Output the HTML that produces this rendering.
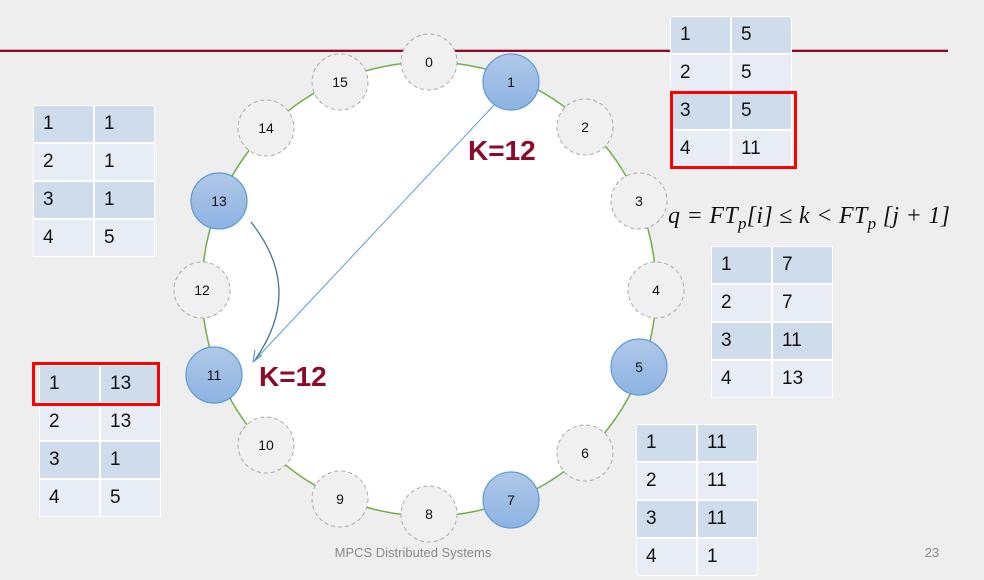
<!DOCTYPE html>
<html><head><style>
body{margin:0;width:984px;height:580px;background:#eeeeee;position:relative;overflow:hidden;font-family:"Liberation Sans",sans-serif}
.t{position:absolute;width:122px;height:152px}
.t div{position:absolute;box-sizing:border-box;border:1px solid #fff;width:61px;height:38px;padding:8px 0 0 9px;font-size:19px;color:#111;line-height:20px}
.d{background:#cfdcec}.l{background:#e8edf5}
.rb{position:absolute;border:3px solid #f00;box-sizing:border-box}
</style></head><body>
<div style="position:absolute;left:0;top:49px;width:948px;height:1px;background:#d9a0ac"></div>
<div style="position:absolute;left:0;top:50px;width:948px;height:2px;background:#8b0a2a"></div>
<svg width="984" height="580" style="position:absolute;left:0;top:0">
<circle cx="429" cy="289" r="227" fill="#fff" stroke="#70ad47" stroke-width="1.5"/>
<g font-family="Liberation Sans" font-size="14" text-anchor="middle" fill="#111">
<g fill="#f0f0f0" stroke="#aaa" stroke-dasharray="4,3">
<circle cx="429" cy="62" r="28"/><circle cx="585" cy="127" r="28"/><circle cx="639" cy="201" r="28"/><circle cx="656" cy="290" r="28"/><circle cx="585" cy="453" r="28"/><circle cx="429" cy="514" r="28"/><circle cx="340" cy="499" r="28"/><circle cx="266" cy="445" r="28"/><circle cx="202" cy="290" r="28"/><circle cx="266" cy="128" r="28"/><circle cx="340" cy="82" r="28"/>
</g>
<defs><linearGradient id="g" x1="0" y1="0" x2="0" y2="1"><stop offset="0" stop-color="#b0c8e8"/><stop offset="1" stop-color="#8db3e2"/></linearGradient></defs>
<g fill="url(#g)" stroke="#5b9bd5" stroke-width="1.2">
<circle cx="511" cy="82" r="28"/><circle cx="639" cy="367" r="28"/><circle cx="511" cy="500" r="28"/><circle cx="214" cy="375" r="28"/><circle cx="219" cy="201" r="28"/>
</g>
<text x="429" y="67">0</text><text x="511" y="87">1</text><text x="585" y="132">2</text><text x="639" y="206">3</text><text x="656" y="295">4</text><text x="639" y="372">5</text><text x="585" y="458">6</text><text x="511" y="505">7</text><text x="429" y="519">8</text><text x="340" y="504">9</text><text x="266" y="450">10</text><text x="214" y="380">11</text><text x="202" y="295">12</text><text x="219" y="206">13</text><text x="266" y="133">14</text><text x="340" y="87">15</text>
</g>
<line x1="495" y1="104" x2="254" y2="361" stroke="#5b9bd5" stroke-width="1"/>
<path d="M251 222 C285 265 290 310 255 360" fill="none" stroke="#41719c" stroke-width="1.3"/>
<path d="M253 362 L255 350 M253 362 L262 355" stroke="#5b9bd5" stroke-width="1.2"/>
<g font-family="Liberation Sans" font-weight="bold" font-size="28" fill="#8b0a2a">
<text x="468" y="160">K=12</text><text x="259" y="386">K=12</text></g>
<text x="668" y="223" font-family="Liberation Serif" font-style="italic" font-size="24" fill="#111" textLength="282">q = FT<tspan font-size="17" dy="6">p</tspan><tspan dy="-6">[i] ≤ k &lt; FT</tspan><tspan font-size="17" dy="6">p</tspan><tspan dy="-6"> [j + 1]</tspan></text>
<text x="413" y="557" font-family="Liberation Sans" font-size="13" fill="#8a8a8a" text-anchor="middle">MPCS Distributed Systems</text>
<text x="932" y="557" font-family="Liberation Sans" font-size="13" fill="#8a8a8a" text-anchor="middle">23</text>
</svg>

<div class="t" style="left:670px;top:16px">
<div class="d" style="left:0;top:0">1</div><div class="d" style="left:61px;top:0">5</div>
<div class="l" style="left:0;top:38px">2</div><div class="l" style="left:61px;top:38px">5</div>
<div class="d" style="left:0;top:76px">3</div><div class="d" style="left:61px;top:76px">5</div>
<div class="l" style="left:0;top:114px">4</div><div class="l" style="left:61px;top:114px">11</div></div>
<div class="rb" style="left:670px;top:91px;width:127px;height:78px"></div>

<div class="t" style="left:33px;top:105px">
<div class="d" style="left:0;top:0">1</div><div class="d" style="left:61px;top:0">1</div>
<div class="l" style="left:0;top:38px">2</div><div class="l" style="left:61px;top:38px">1</div>
<div class="d" style="left:0;top:76px">3</div><div class="d" style="left:61px;top:76px">1</div>
<div class="l" style="left:0;top:114px">4</div><div class="l" style="left:61px;top:114px">5</div></div>

<div class="t" style="left:711px;top:246px">
<div class="d" style="left:0;top:0">1</div><div class="d" style="left:61px;top:0">7</div>
<div class="l" style="left:0;top:38px">2</div><div class="l" style="left:61px;top:38px">7</div>
<div class="d" style="left:0;top:76px">3</div><div class="d" style="left:61px;top:76px">11</div>
<div class="l" style="left:0;top:114px">4</div><div class="l" style="left:61px;top:114px">13</div></div>

<div class="t" style="left:39px;top:365px">
<div class="d" style="left:0;top:0">1</div><div class="d" style="left:61px;top:0">13</div>
<div class="l" style="left:0;top:38px">2</div><div class="l" style="left:61px;top:38px">13</div>
<div class="d" style="left:0;top:76px">3</div><div class="d" style="left:61px;top:76px">1</div>
<div class="l" style="left:0;top:114px">4</div><div class="l" style="left:61px;top:114px">5</div></div>
<div class="rb" style="left:32px;top:362px;width:128px;height:44px"></div>

<div class="t" style="left:636px;top:424px">
<div class="d" style="left:0;top:0">1</div><div class="d" style="left:61px;top:0">11</div>
<div class="l" style="left:0;top:38px">2</div><div class="l" style="left:61px;top:38px">11</div>
<div class="d" style="left:0;top:76px">3</div><div class="d" style="left:61px;top:76px">11</div>
<div class="l" style="left:0;top:114px">4</div><div class="l" style="left:61px;top:114px">1</div></div>
</body></html>
